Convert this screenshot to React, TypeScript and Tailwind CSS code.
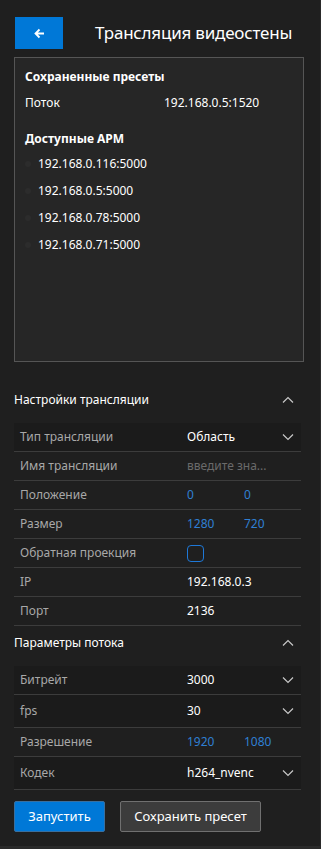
import React from 'react';

const font = { fontFamily: '"Noto Sans", "Open Sans", sans-serif' };

const ChevronDown = () => (
  <svg width="12" height="8" viewBox="0 0 12 8" fill="none" className="text-[#c8c8c8]">
    <path d="M1 1.5l5 5 5-5" stroke="currentColor" strokeWidth="1.2" />
  </svg>
);

const ChevronUp = () => (
  <svg width="12" height="8" viewBox="0 0 12 8" fill="none" className="text-[#c8c8c8]">
    <path d="M1 6.5l5-5 5 5" stroke="currentColor" strokeWidth="1.2" />
  </svg>
);

interface RowProps {
  label: string;
  children?: React.ReactNode;
  select?: boolean;
  tall?: boolean;
}

const Row: React.FC<RowProps> = ({ label, children, select, tall }) => (
  <div
    className={`flex items-center border-b border-[#3c3c3c] pl-[6px] ${tall ? 'h-[33px]' : 'h-[29px]'} ${
      select ? 'bg-[#1b1b1b]' : ''
    }`}
  >
    <div className="w-[167px] text-[12px] text-[#a8a8a8] whitespace-nowrap">{label}</div>
    <div className="flex-1 flex items-center text-[12px] text-white">{children}</div>
    {select && (
      <div className="w-[26px] flex justify-center">
        <ChevronDown />
      </div>
    )}
  </div>
);

const Pair = ({ a, b }: { a: string; b: string }) => (
  <>
    <span className="w-[57px] text-[#2f7fd3]">{a}</span>
    <span className="text-[#2f7fd3]">{b}</span>
  </>
);

const SectionHeader = ({ title }: { title: string }) => (
  <div className="flex items-center justify-between h-[34px] mb-[6px] pr-[10px]">
    <span className="text-[12px] text-white">{title}</span>
    <ChevronUp />
  </div>
);

const App: React.FC = () => {
  const arms = ['192.168.0.116:5000', '192.168.0.5:5000', '192.168.0.78:5000', '192.168.0.71:5000'];

  return (
    <div className="w-[321px] h-[849px] bg-[#1f1f1f] overflow-hidden border-r border-b-[3px] border-[#2a2a2a]" style={font}>
      <div className="pl-[14px] pr-[16px]">
        <div className="flex items-center pt-[17px] h-[49px]">
          <button className="w-[48px] h-[32px] bg-[#0078d7] flex items-center justify-center ml-[1px] shrink-0">
            <svg width="11" height="11" viewBox="0 0 11 11" fill="none">
              <path d="M10 5.5H1.5M5.5 1.5l-4 4 4 4" stroke="white" strokeWidth="1.8" />
            </svg>
          </button>
          <h1 className="ml-[32px] text-[17px] text-white font-normal whitespace-nowrap tracking-[-0.2px]">
            Трансляция видеостены
          </h1>
        </div>

        <div className="mt-[8px] h-[305px] border border-[#555] bg-[#262626] px-[10px] pt-[10px]">
          <div className="text-[12px] font-bold text-white">Сохраненные пресеты</div>
          <div className="flex mt-[8px] text-[12px] text-white">
            <span className="w-[139px]">Поток</span>
            <span>192.168.0.5:1520</span>
          </div>
          <div className="mt-[18px] text-[12px] font-bold text-white">Доступные АРМ</div>
          <div className="mt-[7px] flex flex-col gap-[10px]">
            {arms.map((a) => (
              <div key={a} className="flex items-center h-[17px]">
                <span className="w-[6px] h-[6px] rounded-full bg-[#2c2c2c] mr-[7px]" />
                <span className="text-[12px] text-white">{a}</span>
              </div>
            ))}
          </div>
        </div>

        <div className="mt-[21px]">
          <SectionHeader title="Настройки трансляции" />
          <div className="w-[287px]">
            <Row label="Тип трансляции" select>
              Область
            </Row>
            <Row label="Имя трансляции">
              <span className="text-[#6a6a6a]">введите зна...</span>
            </Row>
            <Row label="Положение">
              <Pair a="0" b="0" />
            </Row>
            <Row label="Размер">
              <Pair a="1280" b="720" />
            </Row>
            <Row label="Обратная проекция">
              <span className="w-[17px] h-[17px] border-[1.5px] border-[#1e78d7] rounded-[4px]" />
            </Row>
            <Row label="IP">192.168.0.3</Row>
            <Row label="Порт">2136</Row>
          </div>
          <SectionHeader title="Параметры потока" />
          <div className="w-[287px]">
            <Row label="Битрейт" select>
              3000
            </Row>
            <Row label="fps" select tall>
              30
            </Row>
            <Row label="Разрешение">
              <Pair a="1920" b="1080" />
            </Row>
            <Row label="Кодек" select tall>
              h264_nvenc
            </Row>
          </div>
        </div>

        <div className="flex gap-[15px] mt-[11px]">
          <button className="w-[91px] h-[31px] bg-[#0078d7] border border-[#3a6f9e] rounded-[2px] text-[13px] text-white">
            Запустить
          </button>
          <button className="w-[141px] h-[31px] bg-[#3c3c3c] border border-[#707070] rounded-[2px] text-[13px] text-white">
            Сохранить пресет
          </button>
        </div>
      </div>
    </div>
  );
};

export default App;
